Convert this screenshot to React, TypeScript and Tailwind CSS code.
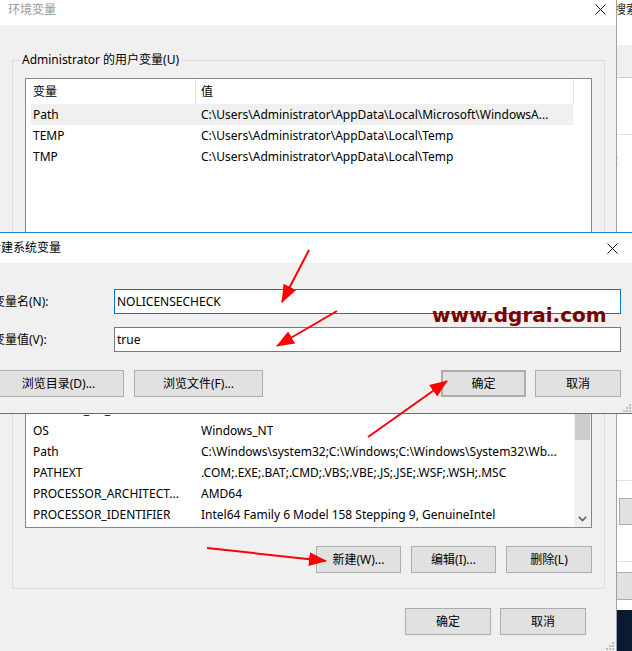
import React from 'react';

type Row = [string, string];

const userVars: Row[] = [
  ['Path', 'C:\\Users\\Administrator\\AppData\\Local\\Microsoft\\WindowsA...'],
  ['TEMP', 'C:\\Users\\Administrator\\AppData\\Local\\Temp'],
  ['TMP', 'C:\\Users\\Administrator\\AppData\\Local\\Temp'],
];

const systemVars: Row[] = [
  ['ComSpec', 'C:\\Windows\\system32\\cmd.exe'],
  ['DriverData', 'C:\\Windows\\System32\\Drivers\\DriverData'],
  ['NUMBER_OF_PROCESSORS', '4'],
  ['OS', 'Windows_NT'],
  ['Path', 'C:\\Windows\\system32;C:\\Windows;C:\\Windows\\System32\\Wb...'],
  ['PATHEXT', '.COM;.EXE;.BAT;.CMD;.VBS;.VBE;.JS;.JSE;.WSF;.WSH;.MSC'],
  ['PROCESSOR_ARCHITECT...', 'AMD64'],
  ['PROCESSOR_IDENTIFIER', 'Intel64 Family 6 Model 158 Stepping 9, GenuineIntel'],
];

const CloseX = () => (
  <svg width="11" height="11" viewBox="0 0 11 11" className="shrink-0">
    <path d="M0.5 0.5 L10.5 10.5 M10.5 0.5 L0.5 10.5" stroke="#111" strokeWidth="1" fill="none" />
  </svg>
);

const Grip = ({ className }: { className: string }) => (
  <svg width="10" height="10" viewBox="0 0 10 10" className={className}>
    {[
      [8, 0], [8, 3], [5, 3], [8, 6], [5, 6], [2, 6],
    ].map(([x, y]) => (
      <rect key={`${x}-${y}`} x={x} y={y + 2} width="2" height="2" fill="#bdbdbd" />
    ))}
  </svg>
);

const Btn = ({ children, className = '' }: { children: React.ReactNode; className?: string }) => (
  <button
    type="button"
    className={`h-[27px] shrink-0 flex items-center justify-center bg-[#e1e1e1] border border-[#adadad] leading-[16px] ${className}`}
  >
    {children}
  </button>
);

const ListBox = ({
  rows,
  selected,
  scroll,
  className,
}: {
  rows: Row[];
  selected?: number;
  scroll?: boolean;
  className: string;
}) => (
  <div className={`border border-[#828790] bg-white flex overflow-hidden ${className}`}>
    <div className="w-[548px] shrink-0">
      <div className="flex h-[25px]">
        <div className="w-[170px] pl-[7px] border-r border-[#e5e5e5] flex items-center">变量</div>
        <div className="w-[378px] pl-[5px] border-r border-[#e5e5e5] flex items-center">值</div>
      </div>
      {rows.map(([name, value], i) => (
        <div
          key={name}
          className={`ml-[5px] w-[542px] h-[21px] flex items-center ${i === selected ? 'bg-[#f0f0f0]' : ''}`}
        >
          <div className="w-[164px] pl-[2px] whitespace-nowrap overflow-hidden">{name}</div>
          <div className="pl-[6px] whitespace-nowrap overflow-hidden">{value}</div>
        </div>
      ))}
    </div>
    {scroll && (
      <div className="w-[17px] shrink-0 bg-[#f0f0f0] flex flex-col">
        <div className="h-[17px]" />
        <div className="mx-[1px] h-[91px] bg-[#cdcdcd]" />
        <div className="flex-1" />
        <div className="h-[17px] flex items-center justify-center">
          <svg width="9" height="6" viewBox="0 0 9 6">
            <path d="M0.8 0.8 L4.5 4.6 L8.2 0.8" stroke="#606060" strokeWidth="1.6" fill="none" />
          </svg>
        </div>
      </div>
    )}
  </div>
);

const MainWindow = () => (
  <div className="w-[617px] h-full shrink-0 flex flex-col bg-[#f0f0f0] border-r border-[#a0a0a0]">
    <div className="h-[25px] shrink-0 bg-white flex items-start justify-between pl-[8px] pr-[10px] pt-[2px]">
      <span className="leading-[16px] text-[#999999]">环境变量</span>
      <div className="mt-[2px]">
        <CloseX />
      </div>
    </div>
    <div className="relative flex-1 flex flex-col pl-[12px] pr-[11px] pt-[27px]">
      <fieldset className="border border-[#dcdcdc]">
        <legend className="ml-[7px] px-[2px] leading-[16px]">Administrator 的用户变量(U)</legend>
        <div className="px-[12px] pt-[10px] pb-[12px]">
          <ListBox rows={userVars} selected={0} className="h-[160px]" />
          <div className="flex justify-end gap-[10px] mt-[10px]">
            <Btn className="w-[85px]">新建(N)...</Btn>
            <Btn className="w-[85px]">编辑(E)...</Btn>
            <Btn className="w-[85px]">删除(D)</Btn>
          </div>
        </div>
      </fieldset>
      <fieldset className="border border-[#dcdcdc] mt-[12px]">
        <legend className="ml-[7px] px-[2px] leading-[16px]">系统变量(S)</legend>
        <div className="px-[12px] pt-[15px] pb-[15px]">
          <ListBox rows={systemVars} scroll className="h-[197px]" />
          <div className="flex justify-end gap-[10px] mt-[18px]">
            <Btn className="w-[85px]">新建(W)...</Btn>
            <Btn className="w-[85px]">编辑(I)...</Btn>
            <Btn className="w-[86px]">删除(L)</Btn>
          </div>
        </div>
      </fieldset>
      <div className="flex justify-end gap-[9px] pr-[19px] mt-[19px]">
        <Btn className="w-[86px]">确定</Btn>
        <Btn className="w-[86px]">取消</Btn>
      </div>
      <Grip className="absolute right-[2px] bottom-[1px]" />
    </div>
  </div>
);

const BackStrip = () => (
  <div className="flex-1 flex flex-col bg-white overflow-hidden">
    <div className="h-[45px] shrink-0 pt-[2px] leading-[16px] whitespace-nowrap -ml-[3px] text-[#222]">搜索</div>
    <div className="h-[33px] shrink-0 bg-[#f0f0f0] border-b border-[#d0d0d0]" />
    <div className="h-[57px] shrink-0 border-b border-[#e0e0e0]" />
    <div className="h-[345px] shrink-0 pt-[17px] leading-[16px] -ml-[5px]">z</div>
    <div className="h-[18px] shrink-0 border-t border-[#e0e0e0]" />
    <div className="h-[27px] shrink-0 ml-[2px] bg-[#e1e1e1] border border-[#adadad] border-r-0" />
    <div className="h-[37px] shrink-0 border-b border-[#e0e0e0]" />
    <div className="h-[10px] shrink-0" />
    <div className="h-[28px] shrink-0 bg-[#e1e1e1] border-y border-[#adadad]" />
    <div className="h-[10px] shrink-0" />
    <div className="flex-1 bg-[#0b1a33]" />
  </div>
);

const NewVarDialog = () => (
  <div className="absolute left-[-21px] top-[232px] w-[653px] h-[182px] border-y border-[#1883d7] bg-[#f0f0f0] flex flex-col">
    <div className="h-[30px] shrink-0 bg-white flex items-center justify-between pl-[10px] pr-[14px]">
      <span className="leading-[16px]">新建系统变量</span>
      <CloseX />
    </div>
    <div className="relative flex-1 pl-[14px] pr-[11px] pt-[26px]">
      <div className="flex items-center h-[25px]">
        <span className="w-[121px] shrink-0 whitespace-nowrap">变量名(N):</span>
        <div className="flex-1 h-full border border-[#0078d7] bg-white flex items-center pl-[2px]">NOLICENSECHECK</div>
      </div>
      <div className="flex items-center h-[25px] mt-[13px]">
        <span className="w-[121px] shrink-0 whitespace-nowrap">变量值(V):</span>
        <div className="flex-1 h-full border border-[#7a7a7a] bg-white flex items-center pl-[2px]">true</div>
      </div>
      <div className="flex mt-[18px]">
        <Btn className="w-[131px]">浏览目录(D)...</Btn>
        <Btn className="w-[129px] ml-[10px]">浏览文件(F)...</Btn>
        <div className="flex-1" />
        <Btn className="w-[85px] border-2 border-[#0078d7]">确定</Btn>
        <Btn className="w-[86px] ml-[9px]">取消</Btn>
      </div>
      <Grip className="absolute right-[1px] bottom-[1px]" />
    </div>
  </div>
);

const Arrows = () => (
  <svg width="632" height="651" className="absolute left-0 top-0 pointer-events-none">
    <defs>
      <marker id="head" markerUnits="userSpaceOnUse" markerWidth="18" markerHeight="14" refX="17" refY="7" orient="auto">
        <path d="M0 0 L18 7 L0 14 Z" fill="#ff0000" />
      </marker>
    </defs>
    {[
      [309, 250, 282, 302],
      [337, 311, 277, 346],
      [368, 437, 447, 381],
      [207, 548, 326, 561],
    ].map(([x1, y1, x2, y2]) => (
      <line key={`${x1}-${y1}`} x1={x1} y1={y1} x2={x2} y2={y2} stroke="#ff0000" strokeWidth="2" markerEnd="url(#head)" />
    ))}
  </svg>
);

export default function App() {
  return (
    <div className="relative w-[632px] h-[651px] overflow-hidden bg-white text-[12px] text-black font-['Noto_Sans','Noto_Sans_CJK_SC',sans-serif]">
      <div className="flex h-full">
        <MainWindow />
        <BackStrip />
      </div>
      <NewVarDialog />
      <div className="absolute left-[432px] top-[303px] text-[20px] leading-[24px] font-bold text-[#7a0000] font-['DejaVu_Sans',sans-serif] whitespace-nowrap">
        www.dgrai.com
      </div>
      <Arrows />
    </div>
  );
}
